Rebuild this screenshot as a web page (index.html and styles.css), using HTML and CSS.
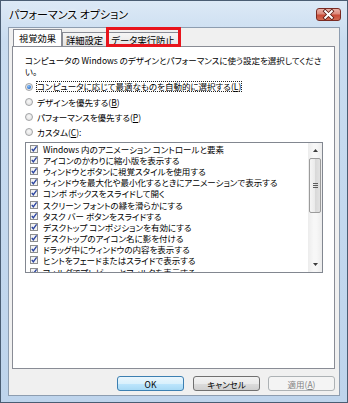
FILE: index.html
```html
<!DOCTYPE html>
<html lang="ja">
<head>
<meta charset="utf-8">
<title>パフォーマンス オプション</title>
<link rel="stylesheet" href="styles.css">
</head>
<body>
<div class="window">
  <div class="titlebar">
    <span class="title">パフォーマンス オプション</span>
    <div class="close">
      <svg width="25" height="13" viewBox="0 0 25 13">
        <path d="M9.2 3.2 L15.8 9.8 M15.8 3.2 L9.2 9.8" stroke="#5b1a12" stroke-width="3.6" stroke-linecap="square" fill="none"/>
        <path d="M9.2 3.2 L15.8 9.8 M15.8 3.2 L9.2 9.8" stroke="#ffffff" stroke-width="2" stroke-linecap="square" fill="none"/>
      </svg>
    </div>
  </div>
  <div class="client">
    <div class="tabs">
      <div class="tab active">視覚効果</div>
      <div class="tab">詳細設定</div>
      <div class="tab marked">データ実行防止</div>
    </div>
    <div class="panel">
      <p class="desc">コンピュータの Windows のデザインとパフォーマンスに使う設定を選択してくださ<br>い。</p>
      <div class="radios">
        <div class="radio-row"><span class="radio checked"></span><span class="rlabel focus">コンピュータに応じて最適なものを自動的に選択する(<u>L</u>)</span></div>
        <div class="radio-row"><span class="radio"></span><span class="rlabel">デザインを優先する(<u>B</u>)</span></div>
        <div class="radio-row"><span class="radio"></span><span class="rlabel">パフォーマンスを優先する(<u>P</u>)</span></div>
        <div class="radio-row"><span class="radio"></span><span class="rlabel">カスタム(<u>C</u>):</span></div>
      </div>
      <div class="list">
        <div class="items">
          <div class="item"><svg class="cb" width="8" height="8" viewBox="0 0 8 8"><rect x="0.5" y="0.5" width="7" height="7" fill="#f3f3f3" stroke="#8e8f8f"/><path d="M1.8 3.9 L3.3 5.8 L6.6 1.3" stroke="#2c45a0" stroke-width="1.4" fill="none"/></svg>Windows 内のアニメーション コントロールと要素</div>
          <div class="item"><svg class="cb" width="8" height="8" viewBox="0 0 8 8"><rect x="0.5" y="0.5" width="7" height="7" fill="#f3f3f3" stroke="#8e8f8f"/><path d="M1.8 3.9 L3.3 5.8 L6.6 1.3" stroke="#2c45a0" stroke-width="1.4" fill="none"/></svg>アイコンのかわりに縮小版を表示する</div>
          <div class="item"><svg class="cb" width="8" height="8" viewBox="0 0 8 8"><rect x="0.5" y="0.5" width="7" height="7" fill="#f3f3f3" stroke="#8e8f8f"/><path d="M1.8 3.9 L3.3 5.8 L6.6 1.3" stroke="#2c45a0" stroke-width="1.4" fill="none"/></svg>ウィンドウとボタンに視覚スタイルを使用する</div>
          <div class="item"><svg class="cb" width="8" height="8" viewBox="0 0 8 8"><rect x="0.5" y="0.5" width="7" height="7" fill="#f3f3f3" stroke="#8e8f8f"/><path d="M1.8 3.9 L3.3 5.8 L6.6 1.3" stroke="#2c45a0" stroke-width="1.4" fill="none"/></svg>ウィンドウを最大化や最小化するときにアニメーションで表示する</div>
          <div class="item"><svg class="cb" width="8" height="8" viewBox="0 0 8 8"><rect x="0.5" y="0.5" width="7" height="7" fill="#f3f3f3" stroke="#8e8f8f"/><path d="M1.8 3.9 L3.3 5.8 L6.6 1.3" stroke="#2c45a0" stroke-width="1.4" fill="none"/></svg>コンボ ボックスをスライドして開く</div>
          <div class="item"><svg class="cb" width="8" height="8" viewBox="0 0 8 8"><rect x="0.5" y="0.5" width="7" height="7" fill="#f3f3f3" stroke="#8e8f8f"/><path d="M1.8 3.9 L3.3 5.8 L6.6 1.3" stroke="#2c45a0" stroke-width="1.4" fill="none"/></svg>スクリーン フォントの縁を滑らかにする</div>
          <div class="item"><svg class="cb" width="8" height="8" viewBox="0 0 8 8"><rect x="0.5" y="0.5" width="7" height="7" fill="#f3f3f3" stroke="#8e8f8f"/><path d="M1.8 3.9 L3.3 5.8 L6.6 1.3" stroke="#2c45a0" stroke-width="1.4" fill="none"/></svg>タスク バー ボタンをスライドする</div>
          <div class="item"><svg class="cb" width="8" height="8" viewBox="0 0 8 8"><rect x="0.5" y="0.5" width="7" height="7" fill="#f3f3f3" stroke="#8e8f8f"/><path d="M1.8 3.9 L3.3 5.8 L6.6 1.3" stroke="#2c45a0" stroke-width="1.4" fill="none"/></svg>デスクトップ コンポジションを有効にする</div>
          <div class="item"><svg class="cb" width="8" height="8" viewBox="0 0 8 8"><rect x="0.5" y="0.5" width="7" height="7" fill="#f3f3f3" stroke="#8e8f8f"/><path d="M1.8 3.9 L3.3 5.8 L6.6 1.3" stroke="#2c45a0" stroke-width="1.4" fill="none"/></svg>デスクトップのアイコン名に影を付ける</div>
          <div class="item"><svg class="cb" width="8" height="8" viewBox="0 0 8 8"><rect x="0.5" y="0.5" width="7" height="7" fill="#f3f3f3" stroke="#8e8f8f"/><path d="M1.8 3.9 L3.3 5.8 L6.6 1.3" stroke="#2c45a0" stroke-width="1.4" fill="none"/></svg>ドラッグ中にウィンドウの内容を表示する</div>
          <div class="item"><svg class="cb" width="8" height="8" viewBox="0 0 8 8"><rect x="0.5" y="0.5" width="7" height="7" fill="#f3f3f3" stroke="#8e8f8f"/><path d="M1.8 3.9 L3.3 5.8 L6.6 1.3" stroke="#2c45a0" stroke-width="1.4" fill="none"/></svg>ヒントをフェードまたはスライドで表示する</div>
          <div class="item"><svg class="cb" width="8" height="8" viewBox="0 0 8 8"><rect x="0.5" y="0.5" width="7" height="7" fill="#f3f3f3" stroke="#8e8f8f"/><path d="M1.8 3.9 L3.3 5.8 L6.6 1.3" stroke="#2c45a0" stroke-width="1.4" fill="none"/></svg>フォルダでプレビューとフィルタを表示する</div>
        </div>
        <div class="vscroll">
          <div class="arrow"><svg width="5" height="3" viewBox="0 0 5 3"><path d="M0 3 L2.5 0 L5 3 Z" fill="#3c3c3c"/></svg></div>
          <div class="thumb"><span class="grip"></span></div>
          <div class="track"></div>
          <div class="arrow"><svg width="5" height="3" viewBox="0 0 5 3"><path d="M0 0 L5 0 L2.5 3 Z" fill="#3c3c3c"/></svg></div>
        </div>
      </div>
    </div>
    <div class="buttons">
      <div class="btn default">OK</div>
      <div class="btn cancel">キャンセル</div>
      <div class="btn disabled">適用(<u>A</u>)</div>
    </div>
  </div>
</div>
</body>
</html>
```

FILE: styles.css
```css
html, body {
  margin: 0;
  padding: 0;
}

body {
  width: 348px;
  height: 403px;
  overflow: hidden;
  font-family: "Noto Sans CJK JP", "Noto Sans", sans-serif;
  font-size: 8.5px;
  color: #000;
  font-feature-settings: "palt";
}

.window {
  box-sizing: border-box;
  width: 348px;
  height: 403px;
  border: 1px solid #4a5d73;
  background: linear-gradient(to bottom, #dce9f6 0px, #c9dcf0 40px, #bed4ec 100%);
  padding: 0 7px 6px 7px;
  display: flex;
  flex-direction: column;
}

.titlebar {
  height: 26px;
  flex: none;
  display: flex;
  align-items: center;
  justify-content: space-between;
}

.title {
  font-size: 11px;
  padding-left: 1px;
  color: #000;
  text-shadow: 0 0 4px #ffffff, 0 0 2px #ffffff;
}

.close {
  width: 25px;
  height: 13px;
  margin-right: -1px;
  box-sizing: border-box;
  border: 1px solid #7a2a22;
  border-radius: 3px;
  background: linear-gradient(to bottom, #eab2a8 0%, #dc8a7c 45%, #c84a36 55%, #d06a52 100%);
  display: flex;
  align-items: center;
  justify-content: center;
  overflow: hidden;
}

.close svg {
  display: block;
  margin: -1px;
}

.client {
  flex: 1;
  display: flex;
  flex-direction: column;
  border: 1px solid #8d9db0;
  background: #f0f0f0;
  padding: 1px 4px 4px 3px;
  min-height: 0;
}

.tabs {
  display: flex;
  align-items: flex-end;
  height: 18px;
  margin-left: 1px;
  flex: none;
  font-size: 9.3px;
}

.tab {
  box-sizing: border-box;
  height: 14px;
  margin-bottom: 1px;
  border: 1px solid #898c95;
  border-bottom: none;
  background: linear-gradient(to bottom, #f6f6f6, #e4e4e4);
  display: flex;
  align-items: center;
  justify-content: center;
  white-space: nowrap;
}

.tab.active {
  width: 49px;
  height: 18px;
  margin-bottom: 0;
  background: #ffffff;
  padding-bottom: 1px;
}

.tab:nth-child(2) {
  width: 45px;
}

.tab.marked {
  width: 72px;
  position: relative;
}

.tab.marked::after {
  content: "";
  position: absolute;
  left: -2px;
  right: -3px;
  top: -6px;
  bottom: -1px;
  border: 3px solid #e8141c;
}

.panel {
  flex: 1;
  margin-top: -1px;
  border: 1px solid #898c95;
  background: #ffffff;
  padding: 8px 11px 0 12px;
  min-height: 0;
}

.desc {
  margin: 0;
  line-height: 10.5px;
  white-space: nowrap;
}

.radios {
  margin-top: 3px;
}

.radio-row {
  height: 15px;
  display: flex;
  align-items: center;
  white-space: nowrap;
}

.radio {
  box-sizing: border-box;
  width: 8px;
  height: 8px;
  border-radius: 50%;
  border: 1px solid #a2a4a6;
  background: radial-gradient(circle at 50% 40%, #f8f8f8 0%, #dcdcdc 100%);
  margin-right: 4px;
  flex: none;
  display: flex;
  align-items: center;
  justify-content: center;
}

.radio.checked::after {
  content: "";
  width: 4px;
  height: 4px;
  border-radius: 50%;
  background: radial-gradient(circle at 40% 35%, #8dc2f5 0%, #2a6fd0 70%, #1b4fa8 100%);
}

.rlabel.focus {
  display: inline-block;
  line-height: 9px;
  outline: 1px dotted #222;
  outline-offset: 0;
}

.list {
  box-sizing: border-box;
  margin-top: 3px;
  height: 131px;
  border: 1px solid #828790;
  display: flex;
  overflow: hidden;
}

.items {
  flex: 1;
  overflow: hidden;
}

.item {
  height: 11.2px;
  display: flex;
  align-items: center;
  padding-left: 4px;
  white-space: nowrap;
}

.cb {
  flex: none;
  margin-right: 5px;
}

.vscroll {
  width: 14px;
  flex: none;
  display: flex;
  flex-direction: column;
  background: linear-gradient(to right, #ececec, #f7f7f7 40%, #f7f7f7 60%, #ececec);
}

.arrow {
  height: 15px;
  flex: none;
  display: flex;
  align-items: center;
  justify-content: center;
}

.arrow svg {
  display: block;
}

.thumb {
  box-sizing: border-box;
  height: 55px;
  margin: 0 1px;
  flex: none;
  border: 1px solid #9b9b9b;
  border-radius: 2px;
  background: linear-gradient(to right, #f5f5f5 0%, #eaeaea 50%, #d8d8d8 51%, #e2e2e2 100%);
  display: flex;
  align-items: center;
  justify-content: center;
}

.grip {
  width: 5px;
  height: 5px;
  background: repeating-linear-gradient(to bottom, #5c5c5c 0, #5c5c5c 1px, transparent 1px, transparent 2px);
}

.track {
  flex: 1;
}

.buttons {
  display: flex;
  justify-content: flex-end;
  margin-top: 7px;
  flex: none;
}

.btn {
  box-sizing: border-box;
  width: 67px;
  height: 15px;
  border-radius: 3px;
  display: flex;
  align-items: center;
  justify-content: center;
  white-space: nowrap;
}

.btn.default {
  margin-right: 9px;
  border: 1px solid #3c7fb1;
  background: linear-gradient(to bottom, #eaf6fd 0%, #d9f0fc 50%, #bee6fd 50%, #a7d9f5 100%);
}

.btn.cancel {
  margin-right: 8px;
  border: 1px solid #707070;
  background: linear-gradient(to bottom, #f2f2f2 0%, #ebebeb 50%, #dddddd 50%, #cfcfcf 100%);
}

.btn.disabled {
  border: 1px solid #adb2b5;
  background: #f4f4f4;
  color: #838383;
}
```
